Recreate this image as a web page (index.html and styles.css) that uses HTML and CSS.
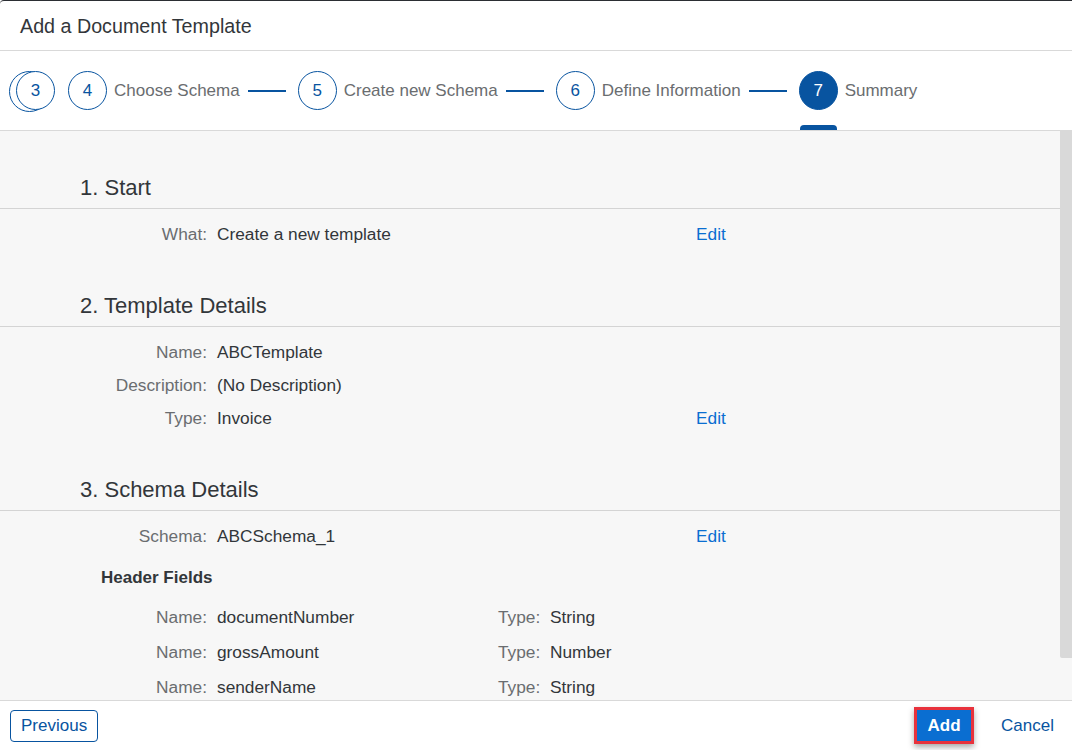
FILE: index.html
```html
<!DOCTYPE html>
<html lang="en">
<head>
<meta charset="utf-8">
<title>Add a Document Template</title>
<link rel="stylesheet" href="styles.css">
</head>
<body>
<div class="dialog">
  <header class="dlg-header">
    <h1 class="dlg-title">Add a Document Template</h1>
  </header>

  <nav class="steps">
    <div class="step step-stacked">
      <span class="circle">3</span>
    </div>
    <div class="step">
      <span class="circle">4</span>
      <span class="step-label">Choose Schema</span>
      <span class="connector"></span>
    </div>
    <div class="step">
      <span class="circle">5</span>
      <span class="step-label">Create new Schema</span>
      <span class="connector"></span>
    </div>
    <div class="step">
      <span class="circle">6</span>
      <span class="step-label">Define Information</span>
      <span class="connector"></span>
    </div>
    <div class="step step-current">
      <span class="circle circle-filled">7</span>
      <span class="step-label">Summary</span>
      <span class="tab-mark"></span>
    </div>
  </nav>

  <div class="body">
    <main class="content">
      <section class="section">
        <h2 class="section-title">1. Start</h2>
        <div class="form">
          <span class="lbl">What:</span><span class="val">Create a new template</span><a class="edit">Edit</a>
        </div>
      </section>

      <section class="section">
        <h2 class="section-title">2. Template Details</h2>
        <div class="form">
          <span class="lbl">Name:</span><span class="val">ABCTemplate</span><span></span>
          <span class="lbl">Description:</span><span class="val">(No Description)</span><span></span>
          <span class="lbl">Type:</span><span class="val">Invoice</span><a class="edit">Edit</a>
        </div>
      </section>

      <section class="section">
        <h2 class="section-title">3. Schema Details</h2>
        <div class="form">
          <span class="lbl">Schema:</span><span class="val">ABCSchema_1</span><a class="edit">Edit</a>
        </div>
        <h3 class="sub-title">Header Fields</h3>
        <div class="fields">
          <span class="lbl">Name:</span><span class="val">documentNumber</span><span class="lbl">Type:</span><span class="val">String</span>
          <span class="lbl">Name:</span><span class="val">grossAmount</span><span class="lbl">Type:</span><span class="val">Number</span>
          <span class="lbl">Name:</span><span class="val">senderName</span><span class="lbl">Type:</span><span class="val">String</span>
        </div>
      </section>
    </main>
    <div class="scrollbar"><div class="thumb"></div></div>
  </div>

  <footer class="dlg-footer">
    <button class="btn btn-ghost">Previous</button>
    <div class="footer-right">
      <span class="highlight"><button class="btn btn-emph">Add</button></span>
      <button class="btn btn-trans">Cancel</button>
    </div>
  </footer>
</div>
</body>
</html>
```

FILE: styles.css
```css
* { box-sizing: border-box; }

html, body {
  margin: 0;
  padding: 0;
  width: 1072px;
  height: 750px;
  overflow: hidden;
  background: #ffffff;
  font-family: "Liberation Sans", Arial, sans-serif;
  color: #32363a;
}

.dialog {
  width: 1072px;
  height: 750px;
  display: flex;
  flex-direction: column;
  border-top: 1px solid #2b2e33;
  border-top-left-radius: 4px;
  background: #fff;
}

.dlg-header {
  height: 50px;
  flex: none;
  display: flex;
  align-items: center;
  padding: 0 20px 0 20px;
  border-bottom: 1px solid #d9d9d9;
}

.dlg-title {
  margin: 0;
  font-size: 19.7px;
  font-weight: normal;
  color: #32363a;
  padding-top: 2px;
}

.steps {
  height: 80px;
  flex: none;
  display: flex;
  align-items: center;
  padding-left: 16px;
  border-bottom: 1px solid #d9d9d9;
  background: #fff;
}

.step {
  position: relative;
  display: flex;
  align-items: center;
  height: 39px;
}

.circle {
  width: 39px;
  height: 39px;
  flex: none;
  border: 1px solid #0854a0;
  border-radius: 50%;
  background: #fff;
  color: #0854a0;
  font-size: 17px;
  display: flex;
  align-items: center;
  justify-content: center;
  position: relative;
  z-index: 1;
}

.step-stacked {
  margin-right: 13px;
}

.step-stacked::before {
  content: "";
  position: absolute;
  left: -7px;
  top: 0;
  width: 39px;
  height: 39px;
  border: 1px solid #0854a0;
  border-radius: 50%;
  background: #fff;
}

.step-label {
  margin-left: 7px;
  font-size: 17px;
  color: #6a6d70;
  white-space: nowrap;
}

.connector {
  width: 38px;
  height: 2px;
  background: #0854a0;
  margin: 0 12px 0 8px;
}

.circle-filled {
  background: #0854a0;
  color: #fff;
}

.tab-mark {
  position: absolute;
  left: 1px;
  top: 54px;
  width: 37px;
  height: 5px;
  background: #0854a0;
  border-radius: 4px 4px 0 0;
}

.body {
  flex: 1;
  display: flex;
  min-height: 0;
  background: #f7f7f7;
}

.content {
  flex: 1;
  overflow: hidden;
  padding-top: 45px;
}

.scrollbar {
  width: 12px;
  flex: none;
  background: #f7f7f7;
}

.thumb {
  height: 527px;
  background: #d9d9d9;
  border-bottom-left-radius: 2px;
}

.section {
  margin-bottom: 43px;
}

.section-title {
  margin: 0;
  font-size: 22px;
  font-weight: normal;
  line-height: 24px;
  color: #32363a;
  padding: 0 0 8px 80px;
  border-bottom: 1px solid #d4d4d4;
}

.form {
  display: grid;
  grid-template-columns: 207px 469px auto;
  column-gap: 10px;
  grid-auto-rows: 33px;
  align-items: center;
  padding-top: 9px;
  font-size: 17.3px;
}

.lbl {
  text-align: right;
  color: #6a6d70;
  white-space: nowrap;
}

.val {
  color: #32363a;
  white-space: nowrap;
}

.edit {
  color: #0a6ed1;
  cursor: pointer;
}

.sub-title {
  margin: 13px 0 0 101px;
  font-size: 17px;
  font-weight: bold;
  line-height: 24px;
  color: #32363a;
}

.fields {
  display: grid;
  grid-template-columns: 207px 271px 42px auto;
  column-gap: 10px;
  grid-auto-rows: 35px;
  align-items: center;
  padding-top: 10px;
  font-size: 17.3px;
}

.dlg-footer {
  height: 50px;
  flex: none;
  border-top: 1px solid #d9d9d9;
  display: flex;
  align-items: center;
  justify-content: space-between;
  padding: 0 10px 0 10px;
  background: #fff;
}

.footer-right {
  display: flex;
  align-items: center;
  gap: 25px;
}

.btn {
  font-family: "Liberation Sans", Arial, sans-serif;
  font-size: 17px;
  height: 32px;
  border-radius: 4px;
  padding: 0 10px;
  cursor: pointer;
}

.btn-ghost {
  border: 1px solid #0854a0;
  background: #fff;
  color: #0854a0;
  width: 88px;
}

.highlight {
  display: inline-flex;
  border: 3px solid #e8323c;
  box-shadow: 0 3px 6px rgba(0, 0, 0, 0.35);
}

.btn-emph {
  height: 31px;
  width: 54px;
  padding: 0;
  border: none;
  border-radius: 0;
  background: #0a6ed1;
  color: #fff;
  font-weight: bold;
}

.btn-trans {
  border: none;
  background: transparent;
  color: #0854a0;
  padding: 0 8px 0 2px;
}
```
